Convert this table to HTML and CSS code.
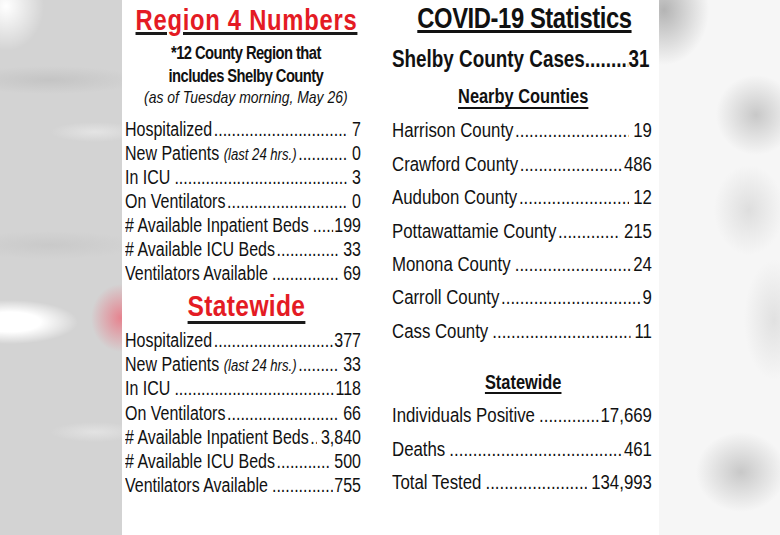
FILE: index.html
```html
<!DOCTYPE html>
<html lang="en">
<head>
<meta charset="utf-8">
<title>COVID-19 Statistics</title>
<link rel="stylesheet" href="styles.css">
</head>
<body>
<div class="page">
  <div class="side side-left"></div>
  <main class="card">
    <section class="col col-left">
      <div class="narrow narrow-left">
        <h1 class="red-title title-region">Region 4 Numbers</h1>
        <p class="sub">*12 County Region that<br>includes Shelby County</p>
        <p class="asof">(as of Tuesday morning, May 26)</p>
        <ul class="list list-small region-list">
          <li class="row"><span class="lbl">Hospitalized</span><span class="dots"></span><span class="val sp">7</span></li>
          <li class="row"><span class="lbl">New Patients <em class="note">(last 24 hrs.)</em></span><span class="dots"></span><span class="val sp">0</span></li>
          <li class="row"><span class="lbl sp">In ICU</span><span class="dots"></span><span class="val sp">3</span></li>
          <li class="row"><span class="lbl">On Ventilators</span><span class="dots"></span><span class="val sp">0</span></li>
          <li class="row"><span class="lbl sp"># Available Inpatient Beds</span><span class="dots"></span><span class="val">199</span></li>
          <li class="row"><span class="lbl"># Available ICU Beds</span><span class="dots"></span><span class="val sp">33</span></li>
          <li class="row"><span class="lbl sp">Ventilators Available</span><span class="dots"></span><span class="val sp">69</span></li>
        </ul>
        <h2 class="red-title title-state">Statewide</h2>
        <ul class="list list-small state-list">
          <li class="row"><span class="lbl">Hospitalized</span><span class="dots"></span><span class="val">377</span></li>
          <li class="row"><span class="lbl">New Patients <em class="note">(last 24 hrs.)</em></span><span class="dots"></span><span class="val sp">33</span></li>
          <li class="row"><span class="lbl sp">In ICU</span><span class="dots"></span><span class="val">118</span></li>
          <li class="row"><span class="lbl">On Ventilators</span><span class="dots"></span><span class="val sp">66</span></li>
          <li class="row"><span class="lbl"># Available Inpatient Beds</span><span class="dots"></span><span class="val sp">3,840</span></li>
          <li class="row"><span class="lbl"># Available ICU Beds</span><span class="dots"></span><span class="val sp">500</span></li>
          <li class="row"><span class="lbl sp">Ventilators Available</span><span class="dots"></span><span class="val">755</span></li>
        </ul>
      </div>
    </section>
    <section class="col col-right">
      <div class="narrow narrow-right">
        <h1 class="black-title">COVID-19 Statistics</h1>
        <div class="row shelby"><span class="lbl">Shelby County Cases</span><span class="dots"></span><span class="val">31</span></div>
        <h2 class="sub-title nearby">Nearby Counties</h2>
        <ul class="list list-big county-list">
          <li class="row"><span class="lbl">Harrison County</span><span class="dots"></span><span class="val sp">19</span></li>
          <li class="row"><span class="lbl">Crawford County</span><span class="dots"></span><span class="val">486</span></li>
          <li class="row"><span class="lbl">Audubon County</span><span class="dots"></span><span class="val sp">12</span></li>
          <li class="row"><span class="lbl">Pottawattamie County</span><span class="dots"></span><span class="val sp">215</span></li>
          <li class="row"><span class="lbl sp">Monona County</span><span class="dots"></span><span class="val">24</span></li>
          <li class="row"><span class="lbl">Carroll County</span><span class="dots"></span><span class="val">9</span></li>
          <li class="row"><span class="lbl sp">Cass County</span><span class="dots"></span><span class="val sp">11</span></li>
        </ul>
        <h2 class="sub-title state-right">Statewide</h2>
        <ul class="list list-big totals-list">
          <li class="row"><span class="lbl sp">Individuals Positive</span><span class="dots"></span><span class="val">17,669</span></li>
          <li class="row"><span class="lbl sp">Deaths</span><span class="dots"></span><span class="val">461</span></li>
          <li class="row"><span class="lbl sp">Total Tested</span><span class="dots"></span><span class="val sp">134,993</span></li>
        </ul>
      </div>
    </section>
  </main>
  <div class="side side-right"></div>
</div>
</body>
</html>
```
FILE: styles.css
```css
* { box-sizing: border-box; }
html, body { margin: 0; padding: 0; }
body {
  width: 780px;
  height: 535px;
  overflow: hidden;
  font-family: "Liberation Sans", Arial, sans-serif;
  color: #111;
  background: #fff;
}
.page {
  display: flex;
  height: 535px;
}
.side { flex: 0 0 122px; height: 100%; }
.side-left {
  background:
    radial-gradient(ellipse 38px 45px at 6px 6px, rgba(255,255,255,1), rgba(255,255,255,0)),
    radial-gradient(ellipse 68px 22px at 10px 322px, rgba(255,255,255,1) 45%, rgba(255,255,255,0)),
    radial-gradient(ellipse 30px 34px at 121px 318px, rgba(235,110,125,0.8), rgba(240,170,175,0) 100%),
    radial-gradient(ellipse 45px 10px at 95px 132px, rgba(232,232,232,0.8), rgba(232,232,232,0)),
    radial-gradient(ellipse 45px 10px at 95px 432px, rgba(230,230,230,0.8), rgba(230,230,230,0)),
    radial-gradient(ellipse 90px 14px at 50px 80px, rgba(190,190,190,0.7), rgba(190,190,190,0)),
    radial-gradient(ellipse 90px 14px at 50px 245px, rgba(195,195,195,0.6), rgba(195,195,195,0)),
    #d3d3d3;
}
.side-right {
  background:
    radial-gradient(ellipse 45px 55px at 5px 10px, rgba(180,180,180,1), rgba(180,180,180,0)),
    radial-gradient(ellipse 40px 40px at 97px 115px, rgba(200,200,200,1), rgba(200,200,200,0)),
    radial-gradient(ellipse 35px 45px at 90px 210px, rgba(222,222,222,1), rgba(222,222,222,0)),
    radial-gradient(ellipse 45px 40px at 82px 472px, rgba(200,200,200,1), rgba(200,200,200,0)),
    radial-gradient(ellipse 30px 60px at 115px 320px, rgba(225,225,225,1), rgba(225,225,225,0)),
    #f6f6f6;
}
.card {
  flex: 0 0 536px;
  background: #fff;
  display: flex;
  padding: 0 7px 0 2.5px;
  gap: 31px;
}
.col { flex: 0 0 auto; }
.col-left { width: 236px; }
.col-right { width: 260px; }

/* Arial-Narrow look: the column is laid out wide, then condensed horizontally */
.narrow {
  display: flex;
  flex-direction: column;
  transform: scaleX(0.82);
  transform-origin: 0 0;
}
.narrow-left { width: 287.8px; padding-top: 4.3px; }
.narrow-right { width: 317px; padding-top: 1.25px; }

h1, h2, p, ul { margin: 0; padding: 0; }
ul { list-style: none; }

.red-title {
  color: #e41b24;
  font-weight: 700;
  line-height: 32px;
  text-align: center;
  padding-left: 8.5px;
  text-decoration: underline;
  text-decoration-color: #1a1a1a;
  text-decoration-thickness: 2.5px;
}
.title-region { font-size: 29px; letter-spacing: 0.9px; text-underline-offset: 2px; }
.title-state { margin-top: 5px; font-size: 30px; letter-spacing: 0.4px; text-underline-offset: 5px; }

.sub {
  margin-top: 6.2px;
  padding-left: 7px;
  font-weight: 700;
  font-size: 18px;
  line-height: 22.5px;
  letter-spacing: -0.7px;
  text-align: center;
}
.asof {
  margin-top: 2.5px;
  padding-left: 7px;
  font-style: italic;
  font-size: 17px;
  line-height: 15px;
  text-align: center;
}

.row { display: flex; align-items: baseline; white-space: nowrap; }
.lbl { flex: 0 0 auto; }
.lbl.sp { margin-right: 3px; }
.val { flex: 0 0 auto; margin-left: 1px; }
.val.sp { margin-left: 5px; }
.dots {
  flex: 1 1 auto;
  min-width: 0;
  overflow: hidden;
  margin-left: 2px;
}
.dots::after {
  content: "........................................................................................................";
}
.note { font-size: 16px; line-height: 1; }

.list-small .row { font-size: 19.5px; line-height: 24px; height: 24px; }
.region-list { margin-top: 11.6px; }
.state-list { margin-top: 6.4px; }
.state-list .row { line-height: 24.2px; height: 24.2px; }

.black-title {
  font-weight: 700;
  font-size: 29px;
  line-height: 34px;
  letter-spacing: -0.5px;
  padding-left: 6px;
  text-align: center;
  text-decoration: underline;
  text-decoration-thickness: 2.6px;
  text-underline-offset: 2.4px;
}
.shelby {
  margin-top: 9.5px;
  font-weight: 700;
  font-size: 23px;
  line-height: 28px;
  height: 28px;
  padding-right: 3px;
}
.shelby .dots, .shelby .val { margin-left: 0; }
.sub-title {
  font-weight: 700;
  font-size: 20px;
  line-height: 24px;
  padding-left: 3px;
  text-align: center;
  text-decoration: underline;
  text-decoration-thickness: 1.8px;
}
.nearby { margin-top: 11.1px; text-underline-offset: 4px; }
.state-right { margin-top: 22.8px; text-underline-offset: 3.4px; }

.list-big .row { font-size: 20.5px; line-height: 33.4px; height: 33.4px; }
.county-list { margin-top: 5.6px; }
.totals-list { margin-top: 4.2px; }
```
